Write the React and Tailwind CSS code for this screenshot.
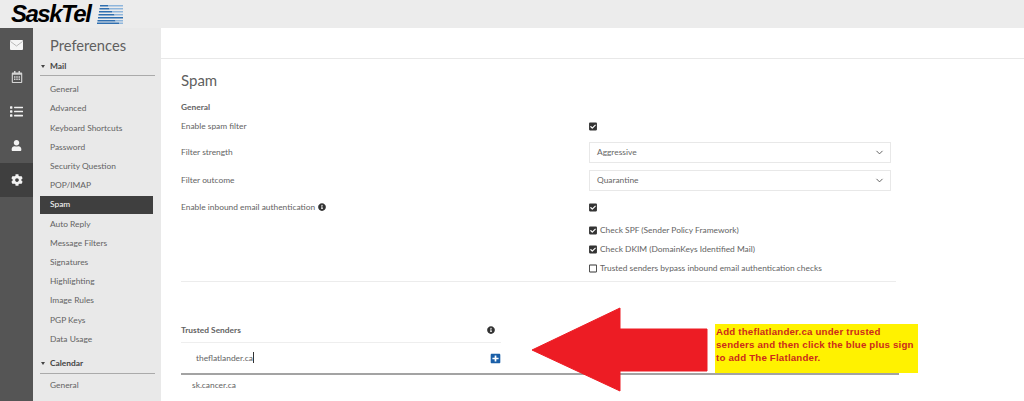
import { ChevronDown } from 'lucide-react'
import { FaRegCalendarAlt, FaList, FaUser, FaCog, FaInfoCircle, FaPlusSquare, FaCheckSquare, FaRegSquare } from 'react-icons/fa'

const mailItems = ['General', 'Advanced', 'Keyboard Shortcuts', 'Password', 'Security Question', 'POP/IMAP', 'Spam', 'Auto Reply', 'Message Filters', 'Signatures', 'Highlighting', 'Image Rules', 'PGP Keys', 'Data Usage']

function Box({ checked = true }) {
  return (
    <span className="w-[8px] flex justify-center shrink-0 text-[#333]">
      {checked ? <FaCheckSquare size={9} /> : <FaRegSquare size={9} />}
    </span>
  )
}

function Dropdown({ label }) {
  return (
    <div className="w-[302px] h-[21px] border border-[#e8e8e8] flex items-center justify-between pl-[7px] pr-[5px] text-[#666]">
      <span>{label}</span>
      <ChevronDown size={11} className="text-[#555]" />
    </div>
  )
}

function Row({ label, info, height, children }) {
  return (
    <div className={`flex items-center ${height}`}>
      <div className="w-[408px] flex items-center gap-[3px] shrink-0">
        <span>{label}</span>
        {info && <FaInfoCircle size={8} className="text-[#333]" />}
      </div>
      {children}
    </div>
  )
}

function GroupHeader({ label, className }) {
  return (
    <div className={`border-b border-[#aaa] flex items-center gap-[4px] font-bold text-[#444] ${className}`}>
      <span className="ml-[1px] w-0 h-0 border-x-[2.5px] border-x-transparent border-t-[3px] border-t-[#444]" />
      <span className="ml-[1px]">{label}</span>
    </div>
  )
}

export default function App() {
  return (
    <div className="relative w-[1024px] h-[401px] overflow-hidden bg-white font-['Lato',sans-serif] text-[8.4px] text-[#636363]">
      {/* Top bar */}
      <div className="h-[28px] bg-[#ececec] flex items-center pl-[11px] gap-[6px]">
        <span className="font-['Liberation_Sans',sans-serif] italic font-bold text-[24px] leading-none tracking-[-1.5px] text-black">SaskTel</span>
        <svg width="27" height="19" viewBox="0 0 27 19">
          <path d="M4 0h8v1.5H4zM3.5 3h10v1.5h-10zM3 6h13v1.5H3zM2.5 9h16v1.5H2.5zM2 12h25v1.5H2zM1.5 15h18v1.5h-18zM1 17.5h22V19H1z" fill="#2f6fb0" />
          <path d="M12 0h15v1.5H12zM13.5 3H27v1.5H13.5zM16 6h11v1.5H16zM18.5 9H27v1.5h-8.5zM19.5 15H27v1.5h-7.5zM23 17.5h4V19h-4z" fill="#8fb6dc" />
        </svg>
      </div>

      <div className="flex h-[373px]">
        {/* Icon rail */}
        <div className="w-[33px] bg-[#555555] flex flex-col items-center text-[#f2f2f2] shrink-0">
          <div className="h-[135px] w-full flex flex-col">
            <div className="h-[34px] flex items-center justify-center">
              <svg width="13" height="10" viewBox="0 0 13 10">
                <rect width="13" height="10" rx="1" fill="#f4f4f4" />
                <path d="M0.5 1.5 L6.5 6 L12.5 1.5" fill="none" stroke="#a8a8a8" strokeWidth="0.8" />
              </svg>
            </div>
            <div className="h-[30px] flex items-center justify-center text-[#d4d4d4]"><FaRegCalendarAlt size={12} /></div>
            <div className="h-[38px] flex items-center justify-center"><FaList size={13} /></div>
            <div className="h-[30px] flex items-center justify-center"><FaUser size={11} /></div>
          </div>
          <div className="h-[34px] w-full bg-[#3f3f3f] flex items-center justify-center">
            <FaCog size={12} />
          </div>
        </div>

        {/* Preferences sidebar */}
        <div className="w-[128px] bg-[#e9e9e9] shrink-0 pl-[7px] pr-[6px]">
          <div className="pl-[10px] pt-[8px] text-[14.7px] leading-[19px] text-[#5f5f5f]">Preferences</div>
          <GroupHeader label="Mail" className="h-[19px] mt-[2px]" />
          <div className="mt-[4px]">
            {mailItems.map(item => (
              <div
                key={item}
                className={item === 'Spam'
                  ? 'h-[18px] my-[0.6px] mr-[2px] pl-[10px] flex items-center bg-[#3f3f3f] text-white'
                  : 'h-[19.2px] pl-[10px] flex items-center'}
              >
                {item}
              </div>
            ))}
          </div>
          <GroupHeader label="Calendar" className="h-[20px] mt-[5px]" />
          <div className="h-[24px] pl-[10px] flex items-center">General</div>
        </div>

        {/* Main panel */}
        <div className="flex-1 min-w-0">
          <div className="h-[31px] border-b border-[#e8e8e8]" />
          <div className="pl-[20px]">
            <div className="pt-[11px] text-[15px] leading-[20px] text-[#5f5f5f]">Spam</div>
            <div className="mt-[10px] h-[14px] flex items-center font-bold">General</div>
            <Row label="Enable spam filter" height="h-[25px]"><Box /></Row>
            <Row label="Filter strength" height="h-[26px]"><Dropdown label="Aggressive" /></Row>
            <Row label="Filter outcome" height="h-[30px]"><Dropdown label="Quarantine" /></Row>
            <Row label="Enable inbound email authentication" info height="h-[24px]"><Box /></Row>
            <div className="w-[715px] h-[63px] border-b border-[#ececec] pl-[408px] pt-[1.5px] flex flex-col">
              <div className="h-[19px] flex items-center gap-[3px]"><Box />Check SPF (Sender Policy Framework)</div>
              <div className="h-[19px] flex items-center gap-[3px]"><Box />Check DKIM (DomainKeys Identified Mail)</div>
              <div className="h-[19px] flex items-center gap-[3px]"><Box checked={false} />Trusted senders bypass inbound email authentication checks</div>
            </div>

            <div className="mt-[36px] w-[320px] h-[25px] border-b border-[#eeeeee] flex items-center justify-between pr-[6px] font-bold">
              <span>Trusted Senders</span>
              <FaInfoCircle size={8} className="text-[#333]" />
            </div>
            <div className="w-[718px] h-[32px] border-b-2 border-[#a3a3a3]">
              <div className="w-[320px] h-full flex items-center justify-between pl-[15px]">
                <span className="flex items-center">theflatlander.ca<span className="inline-block w-px h-[11px] bg-[#333]" /></span>
                <FaPlusSquare size={11} className="text-[#1a5fa8]" />
              </div>
            </div>
            <div className="pl-[11px] mt-[4px]">sk.cancer.ca</div>
          </div>
        </div>
      </div>

      {/* Annotation arrow */}
      <svg className="absolute left-[531px] top-[307px]" width="178" height="86" viewBox="0 0 178 86">
        <path d="M1 43 L89 1 V22 H176 V64 H89 V84 Z" fill="#ed1c24" stroke="#ed1c24" strokeLinejoin="round" />
      </svg>

      {/* Annotation note */}
      <div className="absolute left-[715px] top-[324px] w-[203px] h-[49px] bg-[#fff200] px-[1px] pt-[1px] font-['Liberation_Sans',sans-serif] font-bold text-[9.7px] leading-[13px] tracking-[0.2px] text-[#cc2a1c]">
        Add theflatlander.ca under trusted<br />senders and then click the blue plus sign<br />to add The Flatlander.
      </div>
    </div>
  )
}
